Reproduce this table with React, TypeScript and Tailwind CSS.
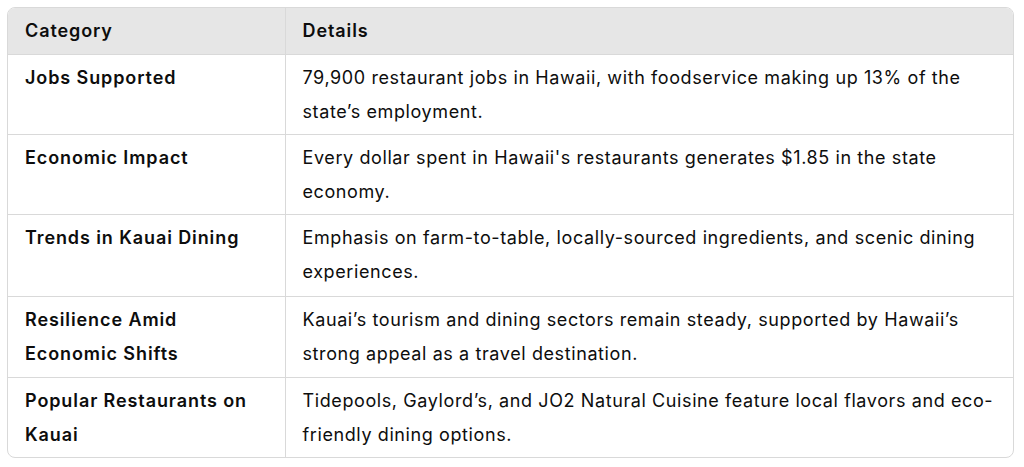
const rows = [
  {
    category: ["Jobs Supported"],
    details: [
      "79,900 restaurant jobs in Hawaii, with foodservice making up 13% of the",
      "state’s employment.",
    ],
    h: "h-[80px]",
  },
  {
    category: ["Economic Impact"],
    details: [
      "Every dollar spent in Hawaii's restaurants generates $1.85 in the state",
      "economy.",
    ],
    h: "h-[80px]",
  },
  {
    category: ["Trends in Kauai Dining"],
    details: [
      "Emphasis on farm-to-table, locally-sourced ingredients, and scenic dining",
      "experiences.",
    ],
    h: "h-[82px]",
  },
  {
    category: ["Resilience Amid", "Economic Shifts"],
    details: [
      "Kauai’s tourism and dining sectors remain steady, supported by Hawaii’s",
      "strong appeal as a travel destination.",
    ],
    h: "h-[81px]",
  },
  {
    category: ["Popular Restaurants on", "Kauai"],
    details: [
      "Tidepools, Gaylord’s, and JO2 Natural Cuisine feature local flavors and eco-",
      "friendly dining options.",
    ],
    h: "h-[79px]",
  },
];

function Lines({ lines }: { lines: string[] }) {
  return (
    <>
      {lines.map((l, i) => (
        <span key={i} className="block whitespace-nowrap">
          {l}
        </span>
      ))}
    </>
  );
}

export default function App() {
  return (
    <div className="min-h-screen bg-white pl-[7px] pt-[7px] text-[#0d0d0d] font-['Inter','Noto_Sans',sans-serif]">
      <div className="w-[1007px] rounded-lg border border-[#d9d9d9] overflow-hidden">
        <table className="w-full border-collapse text-[18px] leading-[34px]">
          <thead>
            <tr className="bg-[#e6e6e6]">
              <th className="w-[277px] border-r border-b border-[#d9d9d9] px-[17px] py-[6px] text-left font-semibold tracking-[0.9px]">
                Category
              </th>
              <th className="border-b border-[#d9d9d9] px-[17px] py-[6px] text-left font-semibold tracking-[0.9px]">
                Details
              </th>
            </tr>
          </thead>
          <tbody>
            {rows.map((row, i) => (
              <tr key={row.category.join(" ")} className={row.h}>
                <td
                  className={
                    i < rows.length - 1
                      ? "border-r border-b border-[#d9d9d9] px-[17px] pt-[6px] pb-0 align-top font-semibold tracking-[0.9px]"
                      : "border-r border-[#d9d9d9] px-[17px] pt-[6px] pb-0 align-top font-semibold tracking-[0.9px]"
                  }
                >
                  <Lines lines={row.category} />
                </td>
                <td
                  className={
                    i < rows.length - 1
                      ? "border-b border-[#d9d9d9] px-[17px] pt-[6px] pb-0 align-top tracking-[0.6px]"
                      : "px-[17px] pt-[6px] pb-0 align-top tracking-[0.6px]"
                  }
                >
                  <Lines lines={row.details} />
                </td>
              </tr>
            ))}
          </tbody>
        </table>
      </div>
    </div>
  );
}
